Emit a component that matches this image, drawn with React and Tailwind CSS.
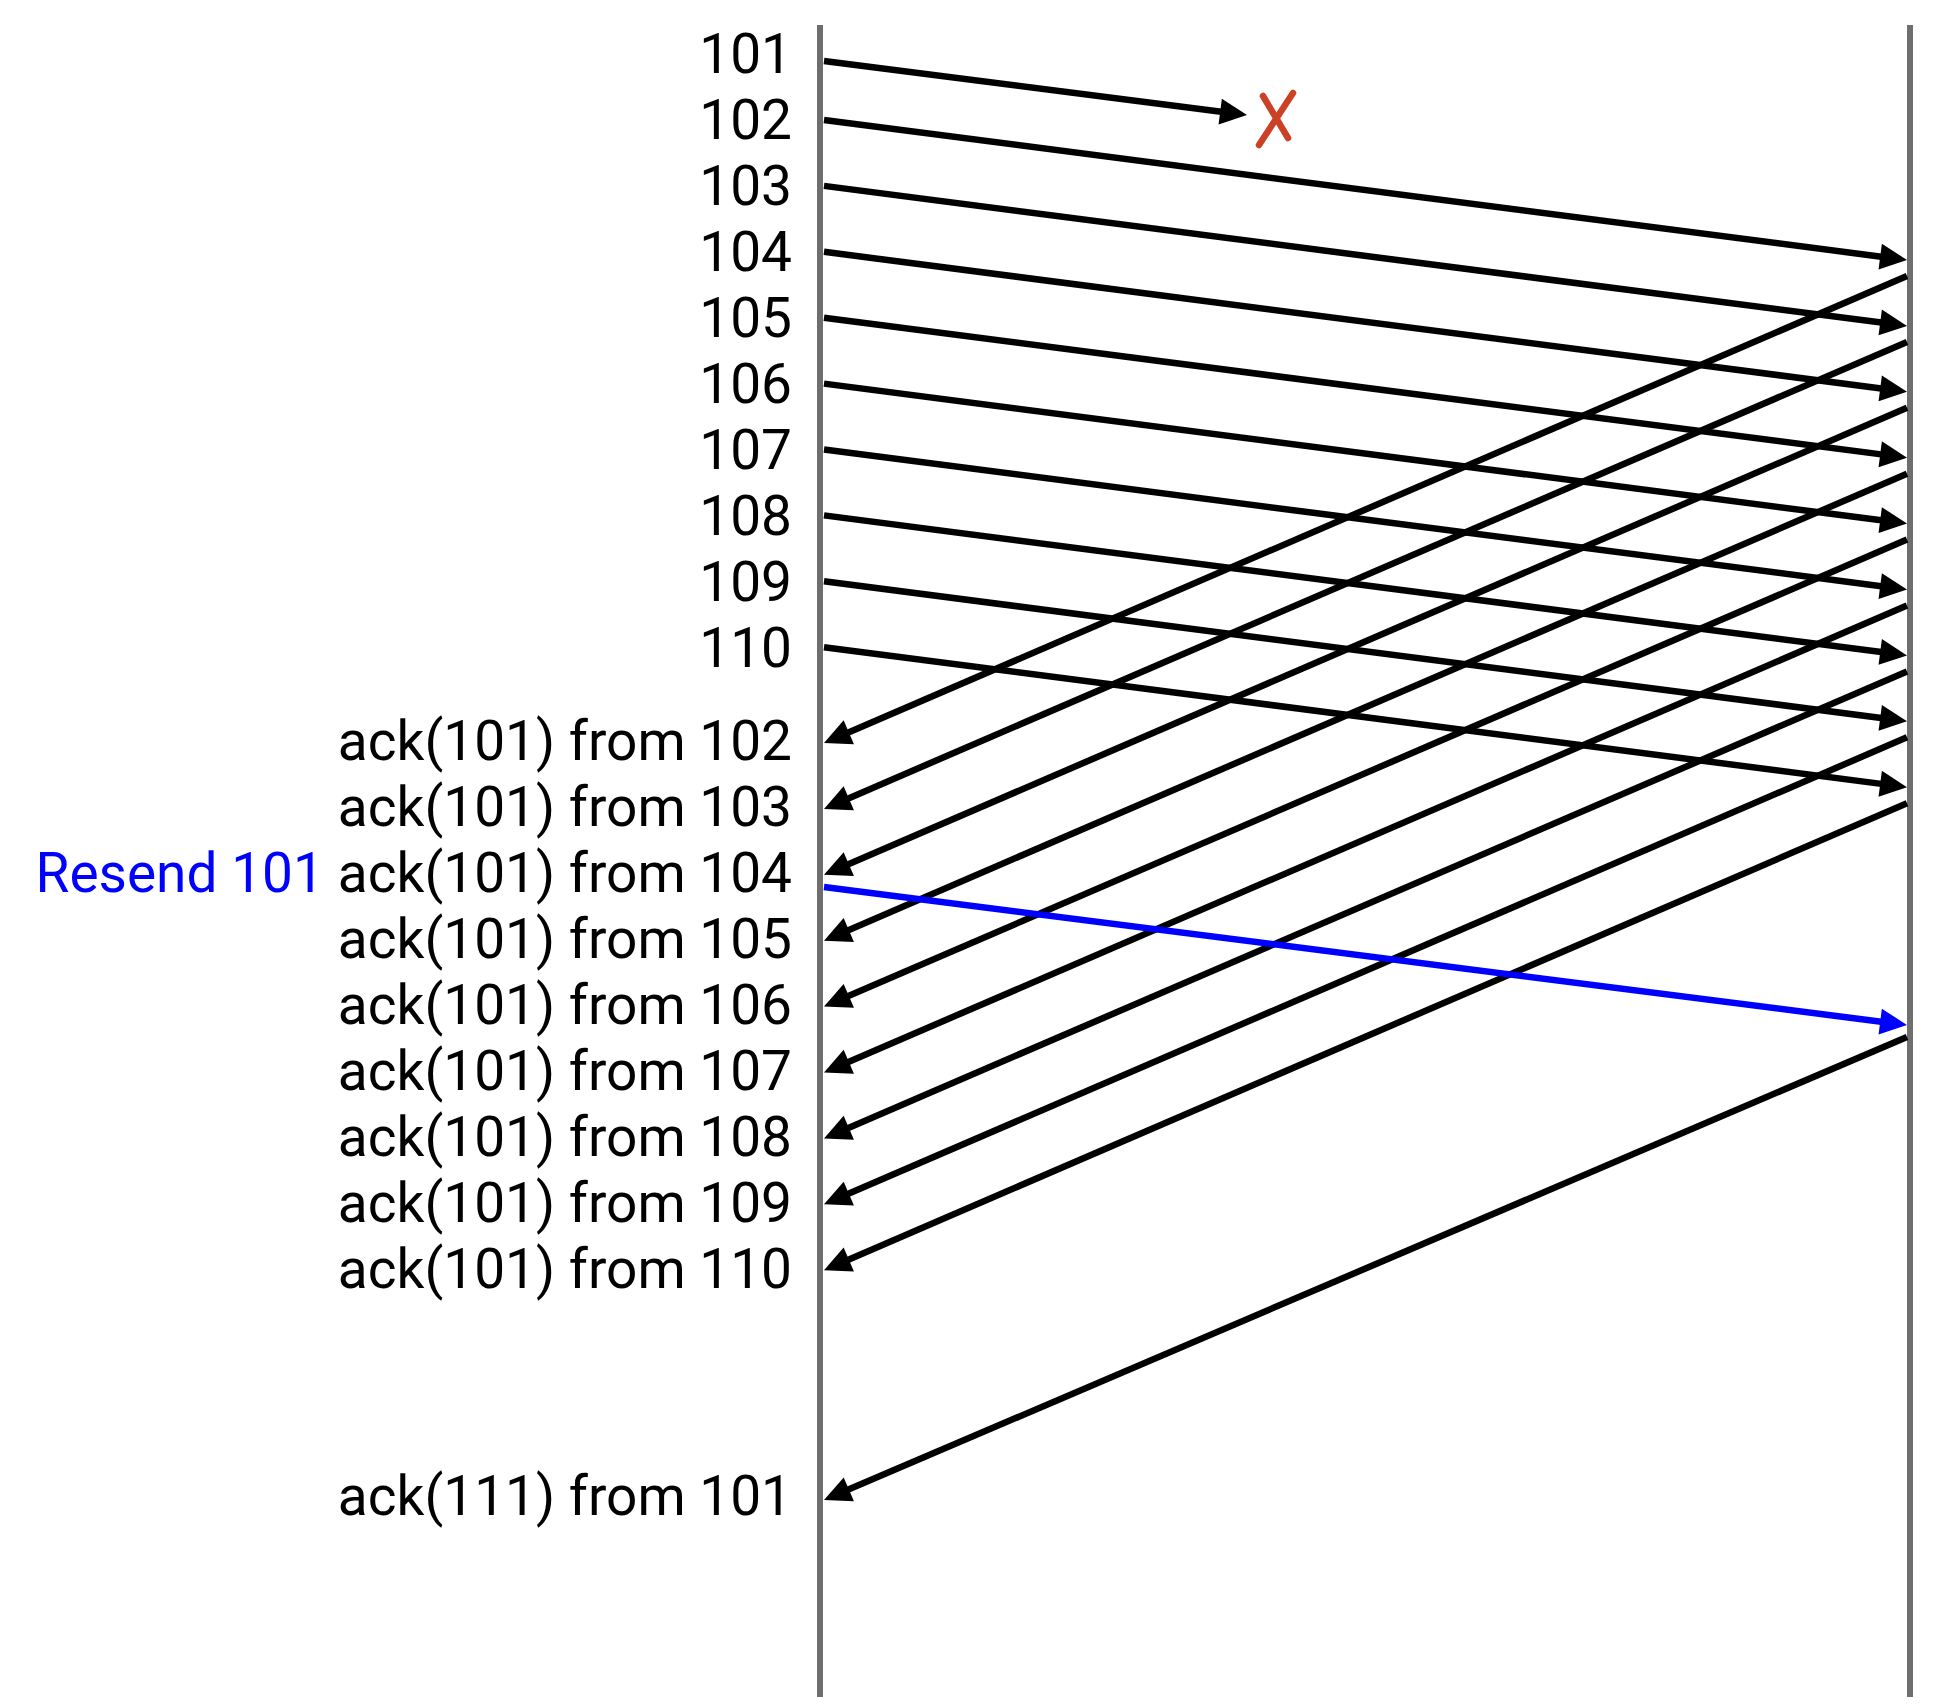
const sent = ["101", "102", "103", "104", "105", "106", "107", "108", "109", "110"];
const acks = ["102", "103", "104", "105", "106", "107", "108", "109", "110"];

const STEP = 65.9;
const LEFT_X = 24;
const RIGHT_X = 1107;

const Arrow = ({ x1, y1, x2, y2, color = "#000" }) => {
  const dx = x2 - x1;
  const dy = y2 - y1;
  const len = Math.hypot(dx, dy);
  const ux = dx / len;
  const uy = dy / len;
  const L = 27;
  const W = 13;
  const bx = x2 - ux * L;
  const by = y2 - uy * L;
  const pts = `${x2},${y2} ${bx - uy * W},${by + ux * W} ${bx + uy * W},${by - ux * W}`;

  return (
    <g>
      <line
        x1={x1}
        y1={y1}
        x2={bx + ux * 3}
        y2={by + uy * 3}
        stroke={color}
        strokeWidth="6.5"
      />
      <polygon points={pts} fill={color} />
    </g>
  );
};

const Diagram = () => {
  return (
    <svg width="1138" height="1705" viewBox="0 0 1138 1705" className="flex-none block">
      <line x1="20" y1="25" x2="20" y2="1697" stroke="#6e6e6e" strokeWidth="6" />
      <line x1="1110" y1="25" x2="1110" y2="1697" stroke="#6e6e6e" strokeWidth="6" />

      {/* lost packet */}
      <Arrow x1={LEFT_X} y1={61} x2={447} y2={115} />
      <g stroke="#cc4125" strokeWidth="6.5" strokeLinecap="round">
        <line x1="459" y1="145" x2="493" y2="93" />
        <line x1="463" y1="96" x2="488" y2="138" />
      </g>

      {/* packets 102-110 */}
      {sent.slice(1).map((n, i) => {
        const y = 120 + STEP * i;
        return <Arrow key={n} x1={LEFT_X} y1={y} x2={RIGHT_X} y2={y + 140} />;
      })}

      {/* duplicate acks */}
      {acks.map((n, i) => {
        const y = 276 + STEP * i;
        return <Arrow key={n} x1={RIGHT_X} y1={y} x2={LEFT_X} y2={743 + STEP * i} />;
      })}

      <Arrow x1={LEFT_X} y1={887} x2={RIGHT_X} y2={1025} color="#0000ff" />
      <Arrow x1={RIGHT_X} y1={1037} x2={LEFT_X} y2={1500} />
    </svg>
  );
};

const App = () => {
  return (
    <div className="min-h-[1705px] w-full bg-white flex font-['Roboto',sans-serif] text-black">
      <div className="w-[800px] flex-none pr-[8px] pt-[21px] text-right text-[55px] leading-[66px]">
        {sent.map((n) => (
          <div key={n}>{n}</div>
        ))}

        <div className="mt-[27px]">
          {acks.map((n) => (
            <div key={n} className="flex justify-end gap-[14px]">
              {n === "104" && <span className="text-[#0000ff]">Resend 101</span>}
              <span>ack(101) from {n}</span>
            </div>
          ))}
        </div>

        <div className="mt-[161px]">ack(111) from 101</div>
      </div>

      <Diagram />
    </div>
  );
};

export default App;
